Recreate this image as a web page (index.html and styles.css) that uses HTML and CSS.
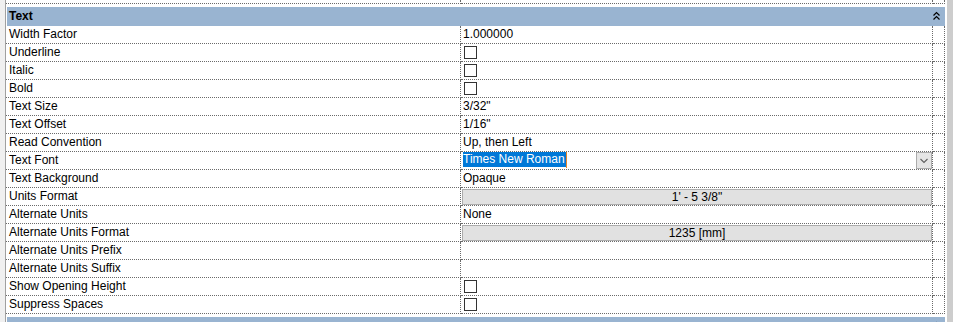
FILE: index.html
```html
<!DOCTYPE html>
<html lang="en">
<head>
  <meta charset="UTF-8">
  <meta name="viewport" content="width=device-width, initial-scale=1.0">
  <title>Properties - Text</title>
  <link rel="stylesheet" href="styles.css">
</head>
<body>
  <div class="palette">
    <div class="gutter"></div>

    <div class="sheet">
      <div class="row row-cut"><div class="name"></div><div class="value"></div><div class="edit"></div></div>

      <div class="group">
        <span>Text</span>
        <svg class="collapse" width="7" height="9" viewBox="0 0 7 9"><path d="M0.5 4.5 L3.5 1.5 L6.5 4.5 M0.5 8.5 L3.5 5.5 L6.5 8.5" fill="none" stroke="#000" stroke-width="1.2"/></svg>
      </div>

      <div class="row"><div class="name">Width Factor</div><div class="value">1.000000</div><div class="edit"></div></div>
      <div class="row"><div class="name">Underline</div><div class="value"><span class="check"></span></div><div class="edit"></div></div>
      <div class="row"><div class="name">Italic</div><div class="value"><span class="check"></span></div><div class="edit"></div></div>
      <div class="row"><div class="name">Bold</div><div class="value"><span class="check"></span></div><div class="edit"></div></div>
      <div class="row"><div class="name">Text Size</div><div class="value">3/32"</div><div class="edit"></div></div>
      <div class="row"><div class="name">Text Offset</div><div class="value">1/16"</div><div class="edit"></div></div>
      <div class="row"><div class="name">Read Convention</div><div class="value">Up, then Left</div><div class="edit"></div></div>
      <div class="row">
        <div class="name">Text Font</div>
        <div class="value">
          <div class="combo">
            <span class="selected">Times New Roman</span><span class="caret"></span>
            <span class="drop">
              <svg width="14" height="15" viewBox="0 0 14 15"><path d="M3.5 6 L7 9.5 L10.5 6" fill="none" stroke="#606060" stroke-width="1.1"/></svg>
            </span>
          </div>
        </div>
        <div class="edit"></div>
      </div>
      <div class="row"><div class="name">Text Background</div><div class="value">Opaque</div><div class="edit"></div></div>
      <div class="row"><div class="name">Units Format</div><div class="value"><span class="btn">1' - 5 3/8"</span></div><div class="edit"></div></div>
      <div class="row"><div class="name">Alternate Units</div><div class="value">None</div><div class="edit"></div></div>
      <div class="row"><div class="name">Alternate Units Format</div><div class="value"><span class="btn">1235 [mm]</span></div><div class="edit"></div></div>
      <div class="row"><div class="name">Alternate Units Prefix</div><div class="value"></div><div class="edit"></div></div>
      <div class="row"><div class="name">Alternate Units Suffix</div><div class="value"></div><div class="edit"></div></div>
      <div class="row"><div class="name">Show Opening Height</div><div class="value"><span class="check"></span></div><div class="edit"></div></div>
      <div class="row"><div class="name">Suppress Spaces</div><div class="value"><span class="check"></span></div><div class="edit"></div></div>

      <div class="group">
        <svg class="collapse" width="7" height="9" viewBox="0 0 7 9"><path d="M0.5 4.5 L3.5 1.5 L6.5 4.5 M0.5 8.5 L3.5 5.5 L6.5 8.5" fill="none" stroke="#000" stroke-width="1.2"/></svg>
      </div>
    </div>

    <div class="scrollbar"></div>
  </div>
</body>
</html>
```

FILE: styles.css
```css
body {
  margin: 0;
  background: #fff;
  font-family: "Liberation Sans", Arial, sans-serif;
  font-size: 12px;
  color: #000;
  overflow: hidden;
}

.palette {
  display: flex;
  height: 322px;
  overflow: hidden;
}

.gutter {
  width: 5px;
  background: #f0f0f0;
  border-right: 1px solid #a0a0a0;
}

.sheet {
  width: 939px;
  margin-right: 2px;
}

.scrollbar {
  width: 6px;
  background: #cdcdcd;
}

.row {
  display: flex;
  height: 18px;
}

.row-cut {
  height: 4px;
}

.name,
.value,
.edit {
  box-sizing: border-box;
  border-right: 1px dotted #6a6a6a;
  border-bottom: 1px dotted #6a6a6a;
  line-height: 16px;
  white-space: nowrap;
}

.name {
  width: 455px;
  padding-left: 3px;
}

.value {
  width: 472px;
  padding-left: 2px;
}

.edit {
  width: 12px;
}

.group {
  display: flex;
  height: 19px;
  margin: 3px 0 0 1px;
  padding-left: 2px;
  background: #99b4d1;
  font-weight: bold;
  line-height: 18px;
}

.collapse {
  margin: 4px 5px 0 auto;
}

.check {
  display: block;
  box-sizing: border-box;
  width: 13px;
  height: 13px;
  margin: 2px 0 0 1px;
  border: 1px solid #333;
}

.btn {
  display: block;
  box-sizing: border-box;
  width: 470px;
  height: 16px;
  margin: 1px 0 0 -1px;
  background: #e1e1e1;
  border: 1px solid #adadad;
  text-align: center;
  line-height: 14px;
}

.combo {
  display: flex;
  align-items: flex-start;
  height: 17px;
}

.selected {
  padding-right: 1px;
  background: #0078d7;
  color: #fff;
  line-height: 15px;
}

.caret {
  width: 1px;
  height: 16px;
  background: #e8862c;
}

.drop {
  display: flex;
  align-items: center;
  justify-content: center;
  box-sizing: border-box;
  width: 16px;
  height: 17px;
  margin-left: auto;
  background: #e5e5e5;
  border: 1px solid #acacac;
}
```
